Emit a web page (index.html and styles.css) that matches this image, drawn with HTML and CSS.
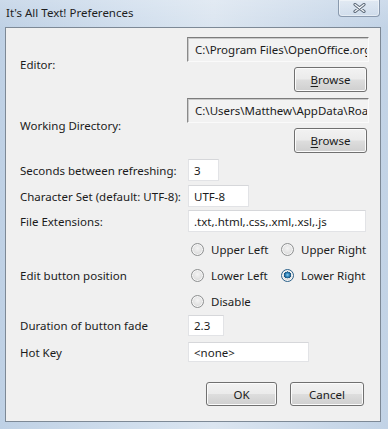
FILE: index.html
```html
<!DOCTYPE html>
<html lang="en">
  <head>
    <meta charset="UTF-8" />
    <meta name="viewport" content="width=device-width, initial-scale=1.0" />
    <title>It's All Text! Preferences</title>
    <link rel="stylesheet" href="styles.css">
  </head>
  <body>
    <section class="dlg-Window">
      <header class="dlg-Titlebar">
        <h1 class="dlg-Title">It's All Text! Preferences</h1>
        <button class="dlg-Close" aria-label="Close">
          <svg width="13" height="10" viewBox="0 0 13 10">
            <path d="M2 1.5 L11 8.5 M11 1.5 L2 8.5" stroke="#5e6b7a" stroke-width="3.2" stroke-linecap="round" fill="none" />
            <path d="M2 1.5 L11 8.5 M11 1.5 L2 8.5" stroke="#f4f7fa" stroke-width="1.2" stroke-linecap="round" fill="none" />
          </svg>
        </button>
      </header>

      <form class="dlg-Client">
        <div class="pref-Row pref-Row_Path">
          <label class="pref-Label">Editor:</label>
          <div class="pref-Stack">
            <input class="pref-Field pref-Field_Path" value="C:\Program Files\OpenOffice.org 3\program\swriter.exe" readonly>
            <button type="button" class="dlg-Btn dlg-Btn_Browse"><u>B</u>rowse</button>
          </div>
        </div>

        <div class="pref-Row pref-Row_Path pref-Row_Gap6">
          <label class="pref-Label">Working Directory:</label>
          <div class="pref-Stack">
            <input class="pref-Field pref-Field_Path" value="C:\Users\Matthew\AppData\Roaming\Mozilla\Firefox" readonly>
            <button type="button" class="dlg-Btn dlg-Btn_Browse"><u>B</u>rowse</button>
          </div>
        </div>

        <div class="pref-Row pref-Row_Gap6">
          <label class="pref-Label">Seconds between refreshing:</label>
          <input class="pref-Field pref-Field_Seconds" value="3">
        </div>

        <div class="pref-Row pref-Row_Gap4">
          <label class="pref-Label">Character Set (default: UTF-8):</label>
          <input class="pref-Field pref-Field_Charset" value="UTF-8">
        </div>

        <div class="pref-Row pref-Row_Gap3">
          <label class="pref-Label">File Extensions:</label>
          <input class="pref-Field pref-Field_Wide" value=".txt,.html,.css,.xml,.xsl,.js">
        </div>

        <div class="pref-Row pref-Row_Gap4">
          <label class="pref-Label">Edit button position</label>
          <div class="pref-Radios">
            <label class="pref-Radio"><input type="radio" name="pos">Upper Left</label>
            <label class="pref-Radio"><input type="radio" name="pos">Upper Right</label>
            <label class="pref-Radio"><input type="radio" name="pos">Lower Left</label>
            <label class="pref-Radio"><input type="radio" name="pos" checked>Lower Right</label>
            <label class="pref-Radio"><input type="radio" name="pos">Disable</label>
          </div>
        </div>

        <div class="pref-Row pref-Row_Gap1">
          <label class="pref-Label">Duration of button fade</label>
          <input class="pref-Field pref-Field_Fade" value="2.3">
        </div>

        <div class="pref-Row pref-Row_Gap6">
          <label class="pref-Label">Hot Key</label>
          <input class="pref-Field pref-Field_Hotkey" value="<none>">
        </div>

        <div class="dlg-Actions">
          <button type="button" class="dlg-Btn dlg-Btn_Ok">OK</button>
          <button type="button" class="dlg-Btn dlg-Btn_Cancel">Cancel</button>
        </div>
      </form>
    </section>
  </body>
</html>
```

FILE: styles.css
```css
html {
  box-sizing: border-box;
}

* {
  box-sizing: inherit;
}

body,
h1 {
  margin: 0;
  font-size: 1rem;
  font-weight: 400;
}

button,
input {
  appearance: none;
  margin: 0;
  padding: 0;
  border: 0;
  background-color: transparent;
  font-family: inherit;
  font-size: inherit;
  color: inherit;
}

body {
  background-color: #c8d7e8;
  font-family: 'Noto Sans', 'Open Sans', sans-serif;
  font-size: 11.5px;
  color: #1b1b1b;
}

/* Window frame */

.dlg-Window {
  width: 388px;
  height: 429px;
  display: flex;
  flex-direction: column;
  background:
    linear-gradient(180deg, rgba(255, 255, 255, 0.2), rgba(255, 255, 255, 0) 28px),
    linear-gradient(90deg, #bfd1e5, #d3e0ee 40%, #dbe5f0 55%, #c9d8e9 85%, #c2d3e6);
}

.dlg-Titlebar {
  height: 27px;
  display: flex;
  align-items: flex-start;
  padding-left: 6px;
}

.dlg-Title {
  padding-top: 5px;
  line-height: 16px;
  font-size: 11.5px;
  color: #1e1e1e;
}

.dlg-Close {
  margin-left: auto;
  margin-right: 8px;
  width: 42px;
  height: 17px;
  display: flex;
  align-items: center;
  justify-content: center;
  border: 1px solid #8a9aae;
  border-top: 0;
  border-radius: 0 0 4px 4px;
  background: linear-gradient(180deg, rgba(255, 255, 255, 0.35), rgba(255, 255, 255, 0.1));
  box-shadow: inset 0 0 0 1px rgba(255, 255, 255, 0.45);
}

.dlg-Client {
  margin: 0 7px 7px 5px;
  padding: 9px 15px 15px 14px;
  display: flex;
  flex-direction: column;
  background-color: #f0f0f0;
  border: 1px solid #7d8996;
}

/* Rows */

.pref-Row {
  display: grid;
  grid-template-columns: 168px 1fr;
  align-items: center;
}

.pref-Row_Gap1 { margin-top: 1px; }
.pref-Row_Gap3 { margin-top: 3px; }
.pref-Row_Gap4 { margin-top: 4px; }
.pref-Row_Gap6 { margin-top: 6px; }

.pref-Label {
  white-space: nowrap;
}

.pref-Stack {
  display: flex;
  flex-direction: column;
  gap: 5px;
}

.pref-Field {
  height: 22px;
  padding: 0 1px 0 5px;
  background-color: #fff;
  border: 1px solid #e2e3e6;
  border-top-color: #d6d7da;
  outline: 0;
}

.pref-Field_Path {
  height: 25px;
  margin-left: -1px;
  padding-left: 7px;
  background-color: #f2f2f2;
  border-color: #7c7c7c #fafafa #fafafa #8a8a8a;
  box-shadow: inset 1px 1px 0 #c9c9c9;
}

.pref-Field_Seconds { width: 31px; }
.pref-Field_Charset { width: 61px; }
.pref-Field_Wide { width: 178px; }
.pref-Field_Fade { width: 36px; height: 21px; }
.pref-Field_Hotkey { width: 121px; height: 20px; }

/* Radio group */

.pref-Radios {
  display: grid;
  grid-template-columns: 90px 1fr;
  grid-auto-rows: 26px;
  align-items: center;
}

.pref-Radio {
  display: flex;
  align-items: center;
  gap: 7px;
  white-space: nowrap;
}

.pref-Radio input {
  width: 13px;
  height: 13px;
  margin-left: 3px;
  border-radius: 50%;
  border: 1px solid #8e9091;
  background: radial-gradient(circle at 50% 40%, #f4f4f4 0, #e4e4e4 45%, #cfcfcf 100%);
  box-shadow: inset 0 0 0 1px #f7f7f7;
}

.pref-Radio input:checked {
  border-color: #2c628b;
  background:
    radial-gradient(circle at 50% 45%, #8fd0f2 0, #3b8fc4 1.6px, #17507c 3.4px, rgba(23, 80, 124, 0) 3.6px),
    radial-gradient(circle at 50% 40%, #f4f4f4 0, #e4e4e4 45%, #cfcfcf 100%);
}

/* Buttons */

.dlg-Btn {
  height: 25px;
  display: flex;
  align-items: center;
  justify-content: center;
  border: 1px solid #707070;
  border-radius: 3px;
  background: linear-gradient(180deg, #f2f2f2 0%, #ebebeb 48%, #dddddd 52%, #cfcfcf 100%);
  box-shadow: inset 0 0 0 1px #fbfbfb;
  color: #1b1b1b;
}

.dlg-Btn u {
  text-decoration-thickness: 1px;
  text-underline-offset: 2px;
}

.dlg-Btn_Browse {
  width: 73px;
  align-self: flex-end;
  margin-right: 2px;
}

.dlg-Actions {
  margin-top: 20px;
  display: flex;
  justify-content: flex-end;
  gap: 13px;
  margin-right: 1px;
}

.dlg-Actions .dlg-Btn {
  height: 24px;
}

.dlg-Btn_Ok { width: 71px; }
.dlg-Btn_Cancel { width: 74px; }
```
